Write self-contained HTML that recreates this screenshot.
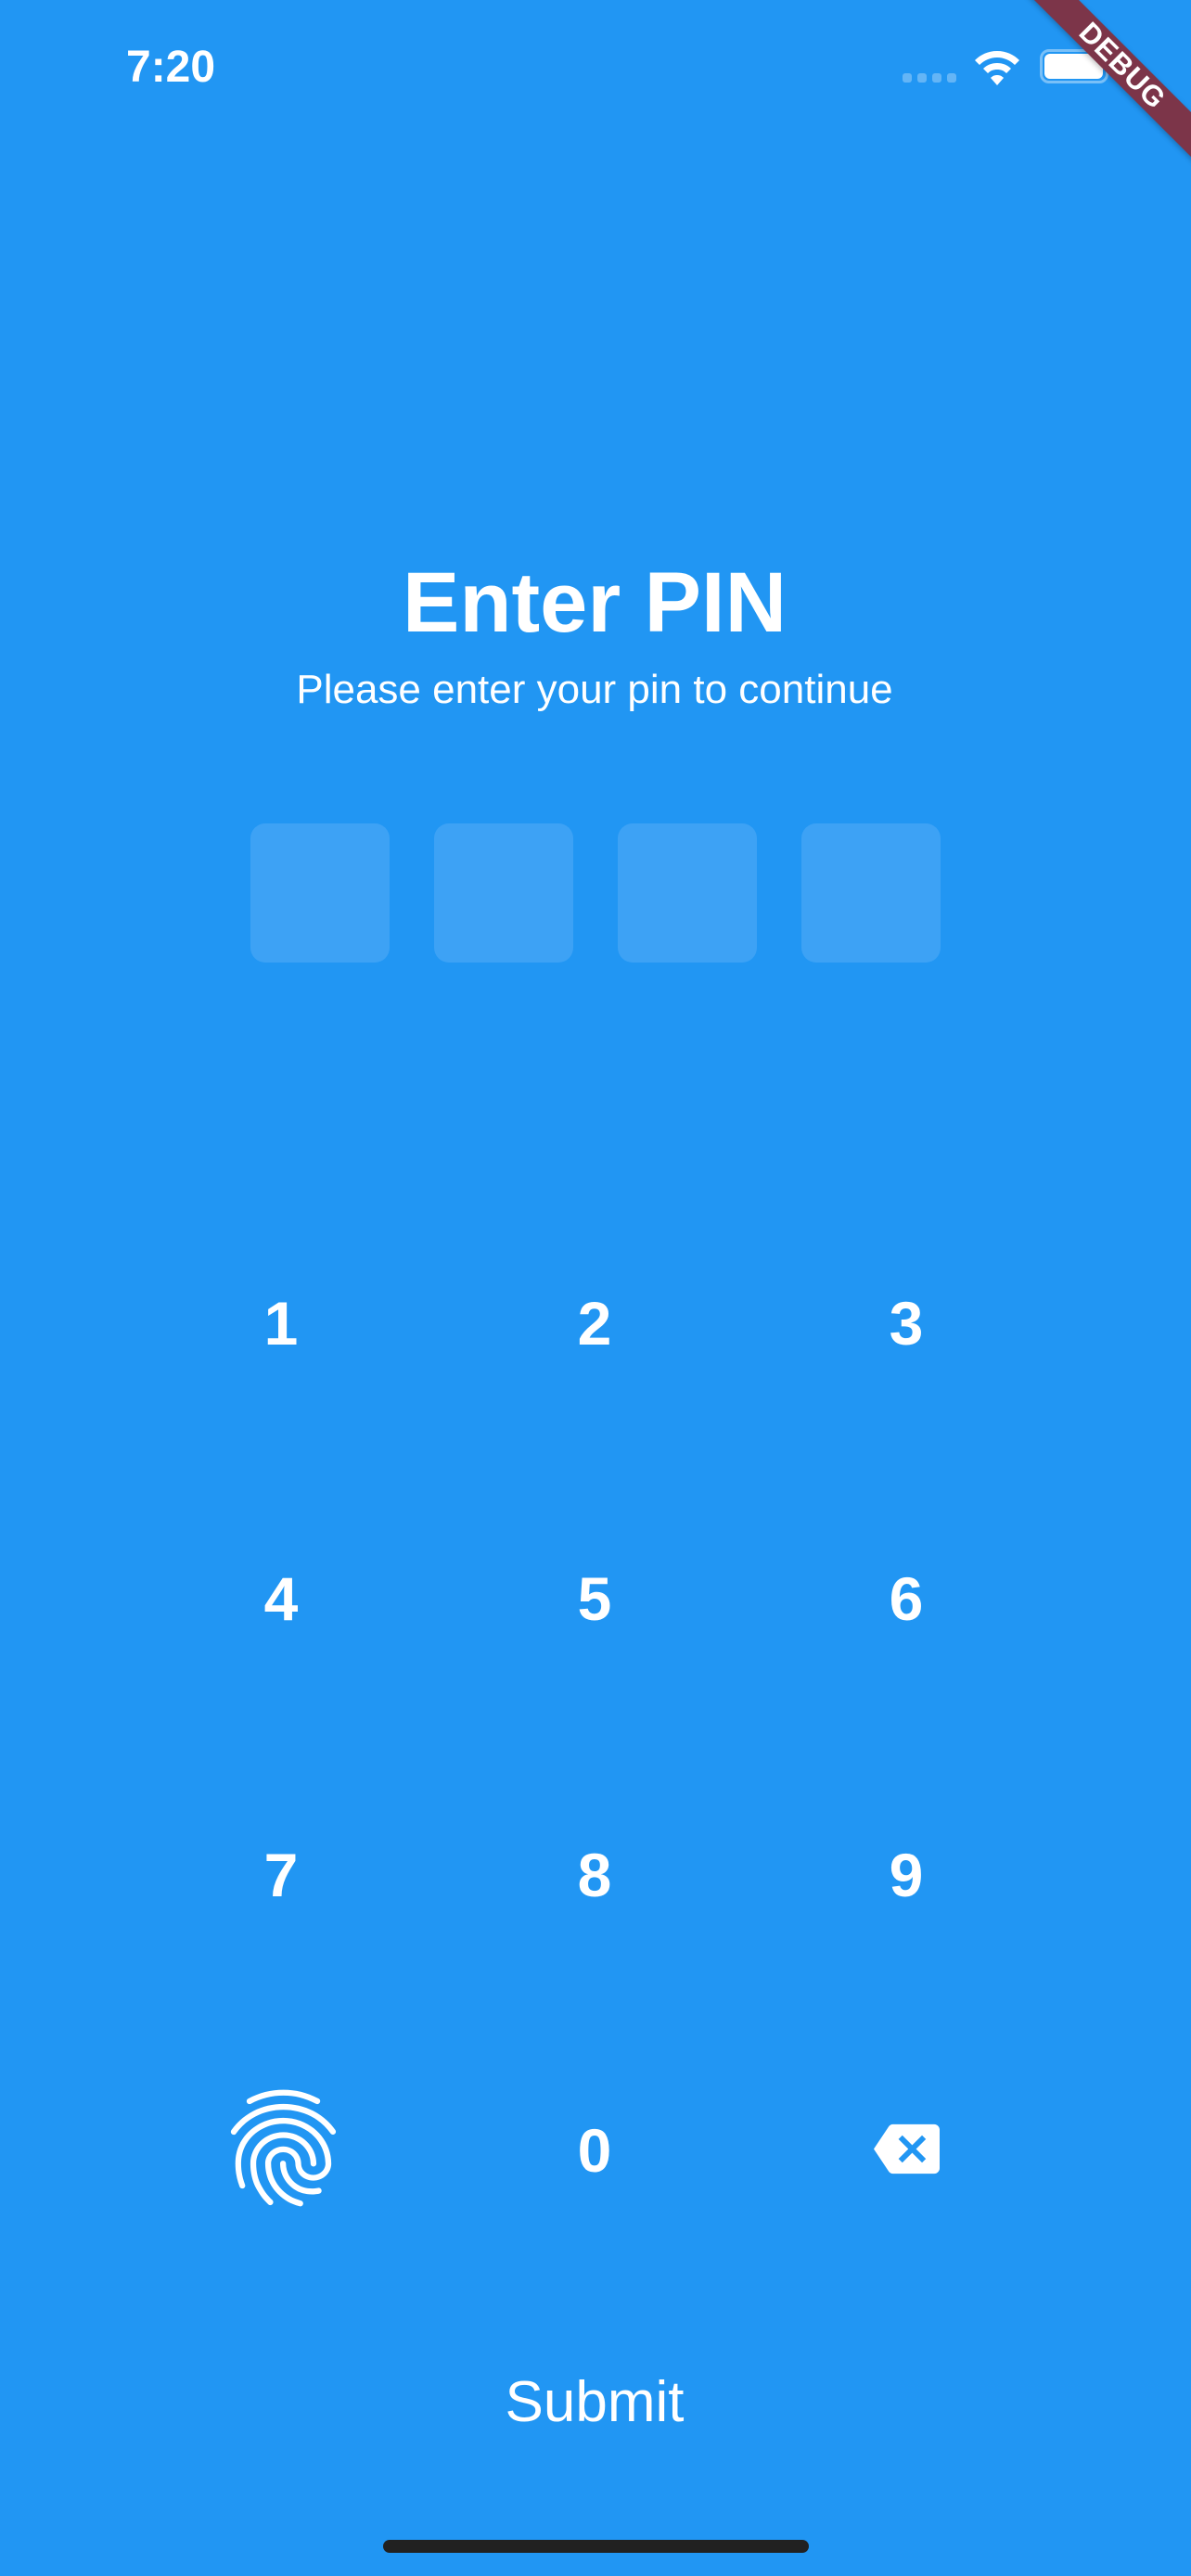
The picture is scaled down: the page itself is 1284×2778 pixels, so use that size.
<!DOCTYPE html>
<html><head><meta charset="utf-8"><style>
html,body{margin:0;padding:0}
body{width:1284px;height:2778px;background:#2196F3;position:relative;overflow:hidden;font-family:"Liberation Sans",sans-serif;color:#fff}
.a{position:absolute;line-height:1;white-space:nowrap}
.c{transform:translateX(-50%)}
.box{position:absolute;top:888px;width:150px;height:150px;border-radius:16px;background:#3DA2F5}
.d{position:absolute;font-weight:bold;font-size:66px;line-height:1;transform:translateX(-50%)}
</style></head><body>
<div class="a" style="left:136px;top:49px;font-size:48px;font-weight:bold">7:20</div>
<svg style="position:absolute;left:970px;top:78px" width="64" height="16"><g fill="#fff" fill-opacity="0.3"><rect x="3" y="1" width="10" height="10" rx="3"/><rect x="19" y="1" width="10" height="10" rx="3"/><rect x="35" y="1" width="10" height="10" rx="3"/><rect x="51" y="1" width="10" height="10" rx="3"/></g></svg>
<svg style="position:absolute;left:1048px;top:52px" width="54" height="42" viewBox="0 0 54 42"><path d="M27 3C17 3 9 7 3 13l5 5c5-5 12-8 19-8s14 3 19 8l5-5C45 7 37 3 27 3z" fill="#fff"/><path d="M27 16c-6 0-11 2-15 6l5 5c3-3 6-4 10-4s7 1 10 4l5-5c-4-4-9-6-15-6z" fill="#fff"/><path d="M27 29c-3 0-5 1-7 3l7 8 7-8c-2-2-4-3-7-3z" fill="#fff"/></svg>
<div style="position:absolute;left:1121px;top:53px;border:3px solid rgba(255,255,255,0.4);border-radius:10px;width:68px;height:31px"></div>
<div style="position:absolute;left:1126px;top:58px;width:63px;height:27px;background:#fff;border-radius:6px"></div>
<div style="position:absolute;left:1196px;top:64px;width:4px;height:13px;background:rgba(255,255,255,0.4);border-radius:0 3px 3px 0"></div>
<div style="position:absolute;left:1080px;top:54px;width:260px;height:34px;background:#7c3549;transform:rotate(45deg);color:#fff;font-weight:900;font-size:31px;line-height:34px;text-align:center;letter-spacing:1px;box-shadow:0 2px 6px rgba(0,0,0,0.25)">DEBUG</div>

<div class="a c" style="left:641px;top:604px;font-size:92px;font-weight:bold">Enter PIN</div>
<div class="a c" style="left:641px;top:722px;font-size:44px">Please enter your pin to continue</div>

<div class="box" style="left:270px"></div>
<div class="box" style="left:468px"></div>
<div class="box" style="left:666px"></div>
<div class="box" style="left:864px"></div>

<div class="d" style="left:303px;top:1394px">1</div>
<div class="d" style="left:641px;top:1394px">2</div>
<div class="d" style="left:977px;top:1394px">3</div>
<div class="d" style="left:303px;top:1691px">4</div>
<div class="d" style="left:641px;top:1691px">5</div>
<div class="d" style="left:977px;top:1691px">6</div>
<div class="d" style="left:303px;top:1989px">7</div>
<div class="d" style="left:641px;top:1989px">8</div>
<div class="d" style="left:977px;top:1989px">9</div>
<div class="d" style="left:641px;top:2286px">0</div>

<svg style="position:absolute;left:230px;top:2241px" width="151" height="151" viewBox="0 0 24 24"><path fill="#fff" d="M17.81 4.47c-.08 0-.16-.02-.23-.06C15.66 3.42 14 3 12.01 3c-1.98 0-3.86.47-5.57 1.41-.24.13-.54.04-.68-.2-.13-.24-.04-.55.2-.68C7.82 2.52 9.86 2 12.01 2c2.13 0 3.99.47 6.03 1.52.25.13.34.43.21.67-.09.18-.26.28-.44.28zM3.5 9.72c-.1 0-.2-.03-.29-.09-.23-.16-.28-.47-.12-.7.99-1.4 2.25-2.5 3.75-3.27C9.98 4.04 14 4.03 17.15 5.65c1.5.77 2.76 1.86 3.75 3.25.16.22.11.54-.12.7-.23.16-.54.11-.7-.12-.9-1.26-2.04-2.25-3.39-2.94-2.87-1.47-6.54-1.47-9.4.01-1.36.7-2.5 1.7-3.4 2.96-.08.14-.23.21-.39.21zm6.25 12.07c-.13 0-.26-.05-.35-.15-.87-.87-1.34-1.43-2.01-2.64-.69-1.23-1.05-2.73-1.05-4.34 0-2.97 2.54-5.39 5.66-5.39s5.66 2.42 5.66 5.39c0 .28-.22.5-.5.5s-.5-.22-.5-.5c0-2.42-2.09-4.39-4.66-4.39-2.57 0-4.66 1.97-4.66 4.39 0 1.44.32 2.77.93 3.85.64 1.15 1.08 1.64 1.85 2.42.19.2.19.51 0 .71-.11.1-.24.15-.37.15zm7.17-1.85c-1.19 0-2.24-.3-3.1-.89-1.49-1.01-2.38-2.65-2.38-4.39 0-.28.22-.5.5-.5s.5.22.5.5c0 1.41.72 2.74 1.94 3.56.71.48 1.54.71 2.54.71.24 0 .64-.03 1.04-.1.27-.05.53.13.58.41.05.27-.13.53-.41.58-.57.11-1.07.12-1.21.12zM14.91 22c-.04 0-.09-.01-.13-.02-1.59-.44-2.63-1.03-3.72-2.1-1.4-1.39-2.17-3.24-2.17-5.22 0-1.62 1.38-2.94 3.08-2.94 1.7 0 3.08 1.32 3.08 2.94 0 1.07.93 1.94 2.08 1.94s2.08-.87 2.08-1.94c0-3.77-3.25-6.83-7.25-6.83-2.84 0-5.440 1.58-6.61 4.03-.39.81-.59 1.76-.59 2.8 0 .78.07 2.01.67 3.61.1.26-.03.55-.29.64-.26.1-.55-.04-.64-.29-.49-1.31-.73-2.61-.73-3.96 0-1.2.23-2.29.68-3.24 1.33-2.79 4.28-4.6 7.51-4.6 4.55 0 8.25 3.51 8.25 7.83 0 1.62-1.38 2.94-3.08 2.94s-3.08-1.32-3.08-2.94c0-1.07-.93-1.94-2.08-1.94s-2.08.87-2.08 1.94c0 1.71.66 3.31 1.87 4.51.95.94 1.86 1.46 3.27 1.85.27.07.42.35.35.61-.05.23-.26.38-.47.38z"/></svg>

<svg style="position:absolute;left:942px;top:2282px" width="71" height="71" viewBox="0 0 24 24"><path fill="#fff" d="M22 3H7c-.69 0-1.23.35-1.59.88L0 12l5.41 8.11c.36.53.9.89 1.59.89h15c1.1 0 2-.9 2-2V5c0-1.1-.9-2-2-2zm-3 12.59L17.59 17 14 13.41 10.41 17 9 15.59 12.59 12 9 8.41 10.41 7 14 10.59 17.59 7 19 8.41 15.41 12 19 15.59z"/></svg>

<div class="a c" style="left:641px;top:2560px;font-size:62px">Submit</div>
<div style="position:absolute;left:413px;top:2739px;width:459px;height:14px;border-radius:7px;background:#212121"></div>
</body></html>
